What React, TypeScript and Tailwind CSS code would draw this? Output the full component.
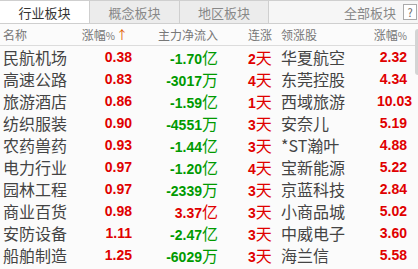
const ROWS = [
  { name: "民航机场", pct: "0.38", flow: "-1.70", unit: "亿", days: "2", lead: "华夏航空", leadPct: "2.32" },
  { name: "高速公路", pct: "0.83", flow: "-3017", unit: "万", days: "4", lead: "东莞控股", leadPct: "4.34" },
  { name: "旅游酒店", pct: "0.86", flow: "-1.59", unit: "亿", days: "1", lead: "西域旅游", leadPct: "10.03" },
  { name: "纺织服装", pct: "0.90", flow: "-4551", unit: "万", days: "3", lead: "安奈儿", leadPct: "5.19" },
  { name: "农药兽药", pct: "0.93", flow: "-1.44", unit: "亿", days: "3", lead: "*ST瀚叶", leadPct: "4.88" },
  { name: "电力行业", pct: "0.97", flow: "-1.20", unit: "亿", days: "4", lead: "宝新能源", leadPct: "5.22" },
  { name: "园林工程", pct: "0.97", flow: "-2339", unit: "万", days: "3", lead: "京蓝科技", leadPct: "2.84" },
  { name: "商业百货", pct: "0.98", flow: "3.37", unit: "亿", days: "3", lead: "小商品城", leadPct: "5.02" },
  { name: "安防设备", pct: "1.11", flow: "-2.47", unit: "亿", days: "3", lead: "中威电子", leadPct: "3.60" },
  { name: "船舶制造", pct: "1.25", flow: "-6029", unit: "万", days: "3", lead: "海兰信", leadPct: "5.58" },
];

const CJK = "font-['Noto_Sans_CJK_SC',sans-serif]";
const NUM = "font-['Liberation_Sans',Arial,sans-serif] font-bold text-[14px]";

export default function App() {
  return (
    <div className={`relative h-[269px] w-[418px] overflow-hidden whitespace-nowrap bg-[#fbfbfb] leading-none ${CJK}`}>
      {/* tabs */}
      <div className="flex h-[24px] border-t border-b border-[#cfcfcf] bg-[#f6f6f6]">
        <div className="flex w-[89px] shrink-0 items-center justify-center bg-white text-[13px] text-[#333]">行业板块</div>
        <div className="flex w-[90px] shrink-0 items-center justify-center border-l border-[#cfcfcf] bg-[#ececec] text-[13px] text-[#888]">概念板块</div>
        <div className="flex w-[90px] shrink-0 items-center justify-center border-x border-[#cfcfcf] bg-[#ececec] text-[13px] text-[#888]">地区板块</div>
        <div className="flex flex-1 items-center justify-end gap-[7px] pr-[1px] text-[13px] text-[#888]">
          <span>全部板块</span>
          <span className="flex h-[16px] w-[14px] items-center justify-center border border-[#aaa] bg-white text-[11px] text-[#666]">?</span>
        </div>
      </div>

      {/* header */}
      <div className="flex h-[22px] items-center border-b border-[#dcdcdc] text-[12px] text-[#777]">
        <div className="w-[70px] shrink-0 pl-[3px]">名称</div>
        <div className="flex w-[58px] shrink-0 items-baseline justify-end">
          涨幅<span className="text-[10px]">%</span>
          <span className="ml-[1px] text-[#e05a00]">↑</span>
        </div>
        <div className="w-[90px] shrink-0 text-right">主力净流入</div>
        <div className="w-[30px] shrink-0" />
        <div className="w-[33px] shrink-0">连涨</div>
        <div className="w-[96px] shrink-0">领涨股</div>
        <div className="flex w-[30px] shrink-0 items-baseline justify-end">
          涨幅<span className="text-[10px]">%</span>
        </div>
      </div>

      {/* rows */}
      <div className="flex flex-col">
        {ROWS.map((r) => {
          const flowColor = r.flow.startsWith("-") ? "text-[#009a00]" : "text-[#e00000]";
          return (
            <div key={r.name} className="flex h-[22px] items-center">
              <div className="w-[70px] shrink-0 pl-[3px] text-[16px] text-[#444]">{r.name}</div>
              <div className={`w-[62px] shrink-0 text-right text-[#e00000] ${NUM}`}>{r.pct}</div>
              <div className={`flex w-[86px] shrink-0 items-baseline justify-end ${flowColor}`}>
                <span className={NUM}>{r.flow}</span>
                <span className="text-[16px]">{r.unit}</span>
              </div>
              <div className="w-[30px] shrink-0" />
              <div className="flex w-[33px] shrink-0 items-baseline text-[#e00000]">
                <span className={NUM}>{r.days}</span>
                <span className="text-[16px]">天</span>
              </div>
              <div className="w-[96px] shrink-0 text-[16px] text-[#444]">{r.lead}</div>
              <div className={`w-[30px] shrink-0 text-right text-[#e00000] ${NUM}`}>{r.leadPct}</div>
            </div>
          );
        })}
      </div>

      {/* scrollbar sliver */}
      <div className="absolute right-0 top-[29px] h-[46px] w-[3px] rounded-l-sm bg-[#d4d4d4]" />
    </div>
  );
}
